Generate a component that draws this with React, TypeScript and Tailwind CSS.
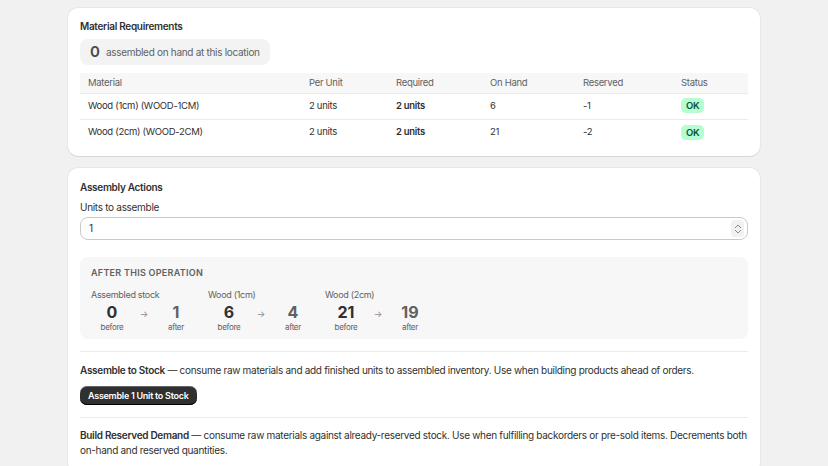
import React from 'react'

const rows = [
  { name: 'Wood (1cm) (WOOD-1CM)', per: '2 units', req: '2 units', hand: '6', res: '-1' },
  { name: 'Wood (2cm) (WOOD-2CM)', per: '2 units', req: '2 units', hand: '21', res: '-2' },
]

const preview = [
  { label: 'Assembled stock', before: '0', after: '1' },
  { label: 'Wood (1cm)', before: '6', after: '4' },
  { label: 'Wood (2cm)', before: '21', after: '19' },
]

function App() {
  return (
    <div className="min-h-[466px] bg-[#f1f1f1] text-[#303030] font-['Inter',sans-serif] text-[10px] tracking-[-0.03em] pt-2">
      <div className="mx-auto w-[692px] flex flex-col gap-3">
        {/* material requirements */}
        <section className="bg-white rounded-[10px] shadow-[0_1px_0_rgba(0,0,0,0.07),0_0_0_1px_rgba(0,0,0,0.04)] px-3 pt-[11px] pb-[11px]">
          <h2 className="font-semibold leading-[14px]">Material Requirements</h2>
          <div className="mt-[6px] inline-flex items-center gap-[6px] bg-[#f3f3f3] rounded-lg h-[26px] pl-[10px] pr-[10px]">
            <span className="text-[15px] font-semibold text-[#4a4a4a] tracking-normal">0</span>
            <span className="text-[#616161]">assembled on hand at this location</span>
          </div>
          <table className="mt-2 w-full border-collapse text-left text-[9.5px]">
            <thead>
              <tr className="bg-[#f7f7f7] h-[20px] text-[#616161] border-b border-[#ebebeb]">
                <th className="font-normal pl-2 w-[229px]">Material</th>
                <th className="font-normal w-[87px]">Per Unit</th>
                <th className="font-normal w-[94px]">Required</th>
                <th className="font-normal w-[93px]">On Hand</th>
                <th className="font-normal w-[98px]">Reserved</th>
                <th className="font-normal">Status</th>
              </tr>
            </thead>
            <tbody>
              {rows.map((r, i) => (
                <tr key={r.name} className={`h-[26px] ${i === 0 ? 'border-b border-[#ebebeb]' : ''}`}>
                  <td className="pl-2">{r.name}</td>
                  <td>{r.per}</td>
                  <td className="font-semibold">{r.req}</td>
                  <td>{r.hand}</td>
                  <td>{r.res}</td>
                  <td>
                    <span className="inline-block bg-[#b4fed2] text-[#0c5132] text-[9.5px] font-semibold rounded-[5px] px-[5px] leading-[15px]">OK</span>
                  </td>
                </tr>
              ))}
            </tbody>
          </table>
        </section>

        {/* assembly actions */}
        <section className="bg-white rounded-[10px] shadow-[0_1px_0_rgba(0,0,0,0.07),0_0_0_1px_rgba(0,0,0,0.04)] px-3 pt-[12px] pb-4">
          <h2 className="font-semibold leading-[14px]">Assembly Actions</h2>
          <div className="mt-[6px] leading-[14px]">Units to assemble</div>
          <div className="mt-[3px] h-[23px] rounded-lg border border-[#c9c9c9] flex items-center justify-between pl-2 pr-[3px]">
            <span>1</span>
            <span className="flex flex-col items-center justify-center bg-[#f1f1f1] rounded h-[17px] w-[13px] text-[#8a8a8a]">
              <svg width="8" height="5" viewBox="0 0 8 5" fill="none" stroke="currentColor" strokeWidth="1"><path d="M1 4 L4 1 L7 4" /></svg>
              <svg width="8" height="5" viewBox="0 0 8 5" fill="none" stroke="currentColor" strokeWidth="1"><path d="M1 1 L4 4 L7 1" /></svg>
            </span>
          </div>

          <div className="mt-[17px] bg-[#f7f7f7] rounded-lg px-[11px] pt-[10px] h-[82px]">
            <div className="text-[9px] font-semibold tracking-[0.03em] text-[#616161] leading-[12px]">AFTER THIS OPERATION</div>
            <div className="mt-[10px] flex gap-[11px]">
              {preview.map((p) => (
                <div key={p.label}>
                  <div className="text-[#616161] text-[9px] leading-[12px]">{p.label}</div>
                  <div className="flex items-start mt-[1px]">
                    <div className="w-[42px] flex flex-col items-center">
                      <span className="text-[16px] font-bold leading-[20px] text-[#303030] tracking-normal">{p.before}</span>
                      <span className="text-[8px] text-[#616161] leading-[10px]">before</span>
                    </div>
                    <span className="w-[22px] text-center text-[9px] text-[#8a8a8a] leading-[20px] pt-[2px]">→</span>
                    <div className="w-[42px] flex flex-col items-center">
                      <span className="text-[16px] font-bold leading-[20px] text-[#616161] tracking-normal">{p.after}</span>
                      <span className="text-[8px] text-[#616161] leading-[10px]">after</span>
                    </div>
                  </div>
                </div>
              ))}
            </div>
          </div>

          <div className="mt-[12px] border-t border-[#ebebeb]" />
          <p className="mt-[11px] leading-[15px]">
            <span className="font-semibold">Assemble to Stock</span> — consume raw materials and add finished units to assembled inventory. Use when building products ahead of orders.
          </p>
          <button className="mt-[8px] h-[19px] px-2 rounded-[7px] bg-[#303030] text-white text-[9px] font-semibold tracking-[-0.03em] shadow-[inset_0_-1px_0_#000,inset_0_1px_0_rgba(255,255,255,0.25)]">
            Assemble 1 Unit to Stock
          </button>
          <div className="mt-[12px] border-t border-[#ebebeb]" />
          <p className="mt-[10px] leading-[15px]">
            <span className="font-semibold">Build Reserved Demand</span> — consume raw materials against already-reserved stock. Use when fulfilling backorders or pre-sold items. Decrements both on-hand and reserved quantities.
          </p>
        </section>
      </div>
    </div>
  )
}

export default App
